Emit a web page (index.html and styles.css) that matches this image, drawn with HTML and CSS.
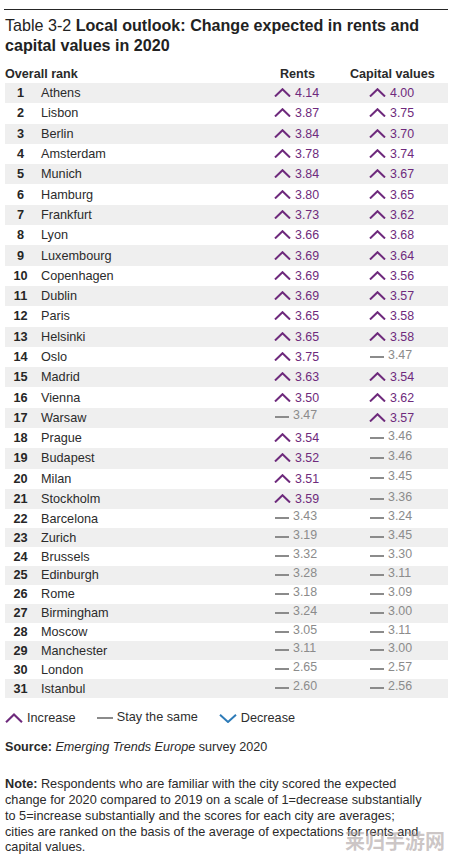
FILE: index.html
```html
<!DOCTYPE html>
<html lang="en">
<head>
    <meta charset="UTF-8">
    <title>Local outlook: Change expected in rents and capital values in 2020</title>
    <link rel="stylesheet" href="styles.css">
</head>
<body>
<svg class="defs" width="0" height="0">
    <symbol id="up" viewBox="0 0 17 9">
        <polyline points="1,8.5 8.5,1.2 16,8.5" fill="none" stroke="currentColor" stroke-width="2"/>
    </symbol>
    <symbol id="down" viewBox="0 0 18 9">
        <polyline points="1,0.8 9,8 17,0.8" fill="none" stroke="currentColor" stroke-width="2"/>
    </symbol>
</svg>

<div class="page">
    <h1 class="title">Table 3-2 <b>Local outlook: Change expected in rents and capital values in 2020</b></h1>

    <div class="head">
        <span>Overall rank</span>
        <span>Rents</span>
        <span>Capital values</span>
    </div>

    <div class="table">
        <div class="row"><span class="rank">1</span><span class="city">Athens</span><span class="val up"><svg><use href="#up"/></svg>4.14</span><span class="val up"><svg><use href="#up"/></svg>4.00</span></div>
        <div class="row"><span class="rank">2</span><span class="city">Lisbon</span><span class="val up"><svg><use href="#up"/></svg>3.87</span><span class="val up"><svg><use href="#up"/></svg>3.75</span></div>
        <div class="row"><span class="rank">3</span><span class="city">Berlin</span><span class="val up"><svg><use href="#up"/></svg>3.84</span><span class="val up"><svg><use href="#up"/></svg>3.70</span></div>
        <div class="row"><span class="rank">4</span><span class="city">Amsterdam</span><span class="val up"><svg><use href="#up"/></svg>3.78</span><span class="val up"><svg><use href="#up"/></svg>3.74</span></div>
        <div class="row"><span class="rank">5</span><span class="city">Munich</span><span class="val up"><svg><use href="#up"/></svg>3.84</span><span class="val up"><svg><use href="#up"/></svg>3.67</span></div>
        <div class="row"><span class="rank">6</span><span class="city">Hamburg</span><span class="val up"><svg><use href="#up"/></svg>3.80</span><span class="val up"><svg><use href="#up"/></svg>3.65</span></div>
        <div class="row"><span class="rank">7</span><span class="city">Frankfurt</span><span class="val up"><svg><use href="#up"/></svg>3.73</span><span class="val up"><svg><use href="#up"/></svg>3.62</span></div>
        <div class="row"><span class="rank">8</span><span class="city">Lyon</span><span class="val up"><svg><use href="#up"/></svg>3.66</span><span class="val up"><svg><use href="#up"/></svg>3.68</span></div>
        <div class="row"><span class="rank">9</span><span class="city">Luxembourg</span><span class="val up"><svg><use href="#up"/></svg>3.69</span><span class="val up"><svg><use href="#up"/></svg>3.64</span></div>
        <div class="row"><span class="rank">10</span><span class="city">Copenhagen</span><span class="val up"><svg><use href="#up"/></svg>3.69</span><span class="val up"><svg><use href="#up"/></svg>3.56</span></div>
        <div class="row"><span class="rank">11</span><span class="city">Dublin</span><span class="val up"><svg><use href="#up"/></svg>3.69</span><span class="val up"><svg><use href="#up"/></svg>3.57</span></div>
        <div class="row"><span class="rank">12</span><span class="city">Paris</span><span class="val up"><svg><use href="#up"/></svg>3.65</span><span class="val up"><svg><use href="#up"/></svg>3.58</span></div>
        <div class="row"><span class="rank">13</span><span class="city">Helsinki</span><span class="val up"><svg><use href="#up"/></svg>3.65</span><span class="val up"><svg><use href="#up"/></svg>3.58</span></div>
        <div class="row"><span class="rank">14</span><span class="city">Oslo</span><span class="val up"><svg><use href="#up"/></svg>3.75</span><span class="val same"><i class="dash"></i>3.47</span></div>
        <div class="row"><span class="rank">15</span><span class="city">Madrid</span><span class="val up"><svg><use href="#up"/></svg>3.63</span><span class="val up"><svg><use href="#up"/></svg>3.54</span></div>
        <div class="row"><span class="rank">16</span><span class="city">Vienna</span><span class="val up"><svg><use href="#up"/></svg>3.50</span><span class="val up"><svg><use href="#up"/></svg>3.62</span></div>
        <div class="row"><span class="rank">17</span><span class="city">Warsaw</span><span class="val same"><i class="dash"></i>3.47</span><span class="val up"><svg><use href="#up"/></svg>3.57</span></div>
        <div class="row"><span class="rank">18</span><span class="city">Prague</span><span class="val up"><svg><use href="#up"/></svg>3.54</span><span class="val same"><i class="dash"></i>3.46</span></div>
        <div class="row"><span class="rank">19</span><span class="city">Budapest</span><span class="val up"><svg><use href="#up"/></svg>3.52</span><span class="val same"><i class="dash"></i>3.46</span></div>
        <div class="row"><span class="rank">20</span><span class="city">Milan</span><span class="val up"><svg><use href="#up"/></svg>3.51</span><span class="val same"><i class="dash"></i>3.45</span></div>
        <div class="row"><span class="rank">21</span><span class="city">Stockholm</span><span class="val up"><svg><use href="#up"/></svg>3.59</span><span class="val same"><i class="dash"></i>3.36</span></div>
        <div class="row flat"><span class="rank">22</span><span class="city">Barcelona</span><span class="val same"><i class="dash"></i>3.43</span><span class="val same"><i class="dash"></i>3.24</span></div>
        <div class="row flat"><span class="rank">23</span><span class="city">Zurich</span><span class="val same"><i class="dash"></i>3.19</span><span class="val same"><i class="dash"></i>3.45</span></div>
        <div class="row flat"><span class="rank">24</span><span class="city">Brussels</span><span class="val same"><i class="dash"></i>3.32</span><span class="val same"><i class="dash"></i>3.30</span></div>
        <div class="row flat"><span class="rank">25</span><span class="city">Edinburgh</span><span class="val same"><i class="dash"></i>3.28</span><span class="val same"><i class="dash"></i>3.11</span></div>
        <div class="row flat"><span class="rank">26</span><span class="city">Rome</span><span class="val same"><i class="dash"></i>3.18</span><span class="val same"><i class="dash"></i>3.09</span></div>
        <div class="row flat"><span class="rank">27</span><span class="city">Birmingham</span><span class="val same"><i class="dash"></i>3.24</span><span class="val same"><i class="dash"></i>3.00</span></div>
        <div class="row flat"><span class="rank">28</span><span class="city">Moscow</span><span class="val same"><i class="dash"></i>3.05</span><span class="val same"><i class="dash"></i>3.11</span></div>
        <div class="row flat"><span class="rank">29</span><span class="city">Manchester</span><span class="val same"><i class="dash"></i>3.11</span><span class="val same"><i class="dash"></i>3.00</span></div>
        <div class="row flat"><span class="rank">30</span><span class="city">London</span><span class="val same"><i class="dash"></i>2.65</span><span class="val same"><i class="dash"></i>2.57</span></div>
        <div class="row flat"><span class="rank">31</span><span class="city">Istanbul</span><span class="val same"><i class="dash"></i>2.60</span><span class="val same"><i class="dash"></i>2.56</span></div>
    </div>

    <div class="legend">
        <span class="key"><svg class="key-up"><use href="#up"/></svg>Increase</span>
        <span class="key same-key"><i class="dash"></i>Stay the same</span>
        <span class="key"><svg class="key-down"><use href="#down"/></svg>Decrease</span>
    </div>

    <p class="source"><b>Source:</b> <em>Emerging Trends Europe</em> survey 2020</p>

    <p class="note"><b>Note:</b> Respondents who are familiar with the city scored the expected change for 2020 compared to 2019 on a scale of 1=decrease substantially to 5=increase substantially and the scores for each city are averages; cities are ranked on the basis of the average of expectations for rents and capital values.</p>

    <span class="watermark">莱归手游网</span>
</div>
</body>
</html>
```

FILE: styles.css
```css
body {
    margin: 0;
    background: #fff;
    color: #232323;
    font-family: "Liberation Sans", Arial, sans-serif;
}

svg.defs {
    position: absolute;
}

.page {
    position: relative;
    height: 861px;
    padding: 9px 4px 0 5px;
    box-sizing: border-box;
}

.title {
    margin: 0 0 0 -1px;
    padding: 5px 0 0 1px;
    border-top: 1px solid #262626;
    font-size: 16.1px;
    line-height: 20px;
    font-weight: normal;
    color: #222;
}

.title b {
    font-weight: bold;
}

.head {
    display: grid;
    grid-template-columns: 275px 70px 1fr;
    margin-top: 9px;
    height: 19px;
    align-items: center;
    font-size: 12.6px;
    font-weight: bold;
    color: #2a2a2a;
}

.row {
    display: grid;
    grid-template-columns: 31px 234px 95px 1fr;
    align-items: center;
    height: 20.3px;
    font-size: 12.7px;
}

.row.flat {
    height: 18.9px;
}

.row:nth-child(odd) {
    background: #efefef;
}

.rank {
    text-align: center;
    font-weight: bold;
    color: #262626;
}

.city {
    padding-left: 5px;
    color: #2b2b2b;
}

.val {
    display: flex;
    align-items: center;
    gap: 4px;
    padding-left: 4px;
    font-size: 12.4px;
}

.val svg {
    width: 17px;
    height: 9px;
    margin-top: -1px;
}

.val.up {
    color: #6e2a7c;
}

.val.same {
    color: #8b8b8b;
    padding-bottom: 5px;
    padding-left: 5px;
}

.dash {
    display: block;
    width: 14px;
    height: 2px;
    margin-top: 4px;
    background: #8b8b8b;
}

.legend {
    display: flex;
    align-items: center;
    gap: 21px;
    margin-top: 10px;
    height: 20px;
    font-size: 12.7px;
    color: #2e2e2e;
}

.key {
    display: flex;
    align-items: center;
    gap: 4px;
}

.key-up {
    width: 18px;
    height: 10px;
    color: #6e2a7c;
}

.key-down {
    width: 18px;
    height: 9px;
    color: #2d7bb8;
}

.same-key {
    padding-bottom: 3px;
}

.same-key .dash {
    width: 16px;
    margin-top: 3px;
}

.source {
    margin: 11px 0 0;
    font-size: 12.6px;
    line-height: 16px;
    color: #2a2a2a;
}

.note {
    margin: 22px 0 0;
    padding-right: 22px;
    font-size: 12.7px;
    line-height: 15.8px;
    color: #2a2a2a;
}

.watermark {
    position: absolute;
    right: 7px;
    bottom: 6px;
    font-family: "Noto Sans CJK SC", sans-serif;
    font-size: 20px;
    font-weight: bold;
    color: rgba(170, 160, 160, 0.6);
}
```
